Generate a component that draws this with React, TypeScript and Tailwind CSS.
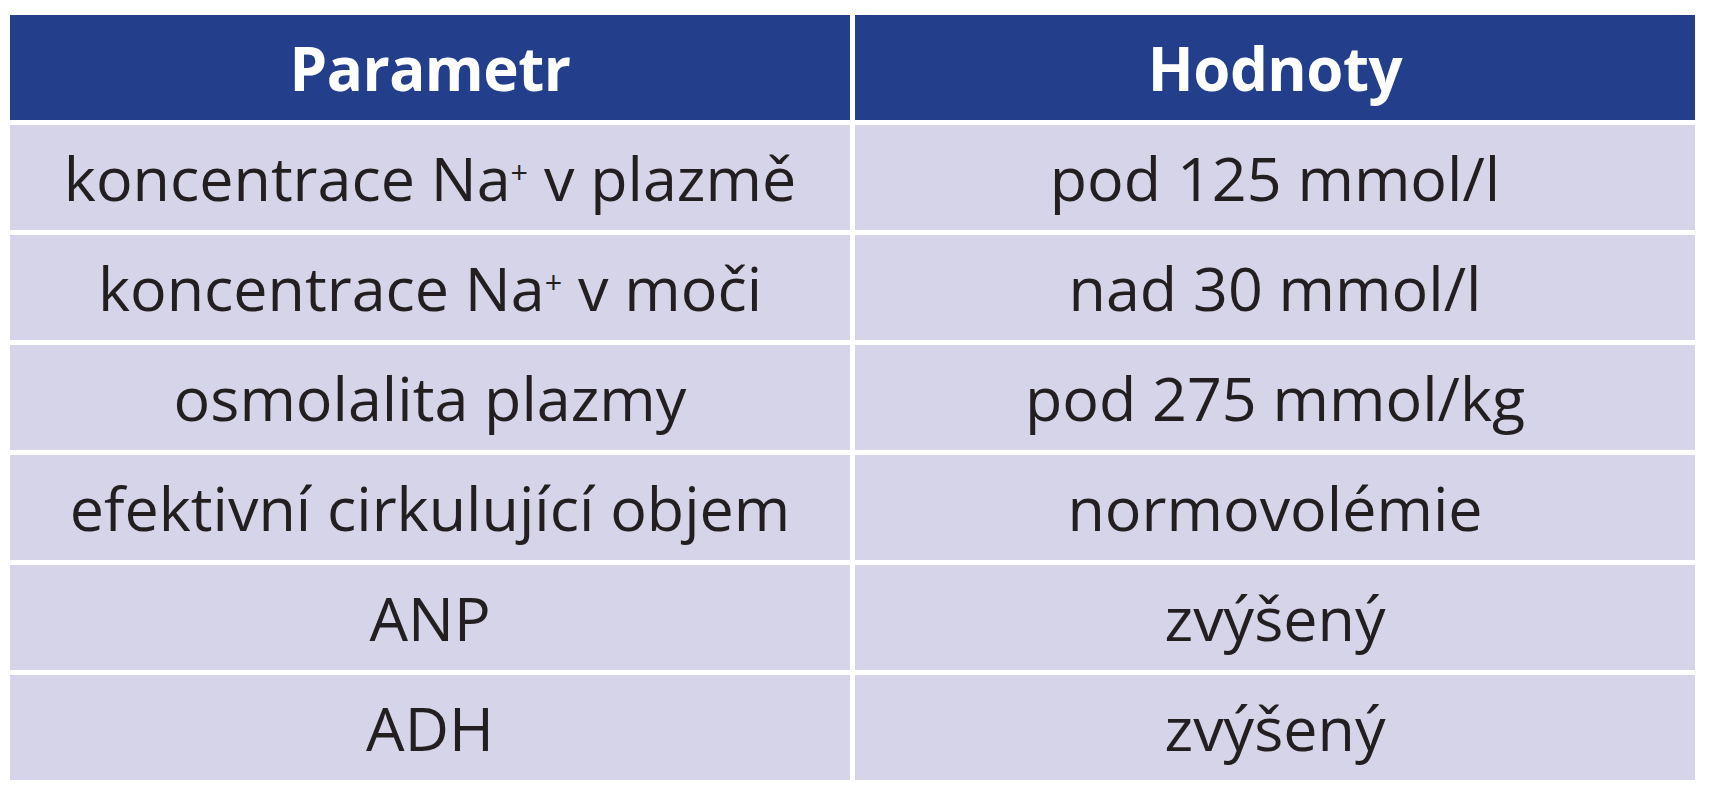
import React from "react";

type Row = { param: React.ReactNode; value: string };

const Plus = () => (
  <span className="relative -top-[0.55em] text-[0.5em] leading-none">+</span>
);

const rows: Row[] = [
  {
    param: (
      <>
        koncentrace Na<Plus /> v plazmě
      </>
    ),
    value: "pod 125 mmol/l",
  },
  {
    param: (
      <>
        koncentrace Na<Plus /> v moči
      </>
    ),
    value: "nad 30 mmol/l",
  },
  { param: "osmolalita plazmy", value: "pod 275 mmol/kg" },
  { param: "efektivní cirkulující objem", value: "normovolémie" },
  { param: "ANP", value: "zvýšený" },
  { param: "ADH", value: "zvýšený" },
];

const App: React.FC = () => {
  return (
    <div className="min-h-[800px] bg-white pl-[10px] pt-[15px] font-['Open_Sans',sans-serif]">
      <div className="grid w-[1685px] grid-cols-2 gap-[5px]">
        <div className="flex h-[105px] items-center justify-center bg-[#233f8b] text-[60px] font-bold tracking-[-0.5px] text-white">
          Parametr
        </div>
        <div className="flex h-[105px] items-center justify-center bg-[#233f8b] text-[60px] font-bold tracking-[-0.5px] text-white">
          Hodnoty
        </div>
        {rows.map((r, i) => (
          <React.Fragment key={i}>
            <div className="flex h-[105px] items-center justify-center bg-[#d5d4e8] text-[61px] leading-none text-[#231f20]">
              <span>{r.param}</span>
            </div>
            <div className="flex h-[105px] items-center justify-center bg-[#d5d4e8] text-[61px] leading-none text-[#231f20]">
              <span>{r.value}</span>
            </div>
          </React.Fragment>
        ))}
      </div>
    </div>
  );
};

export default App;
